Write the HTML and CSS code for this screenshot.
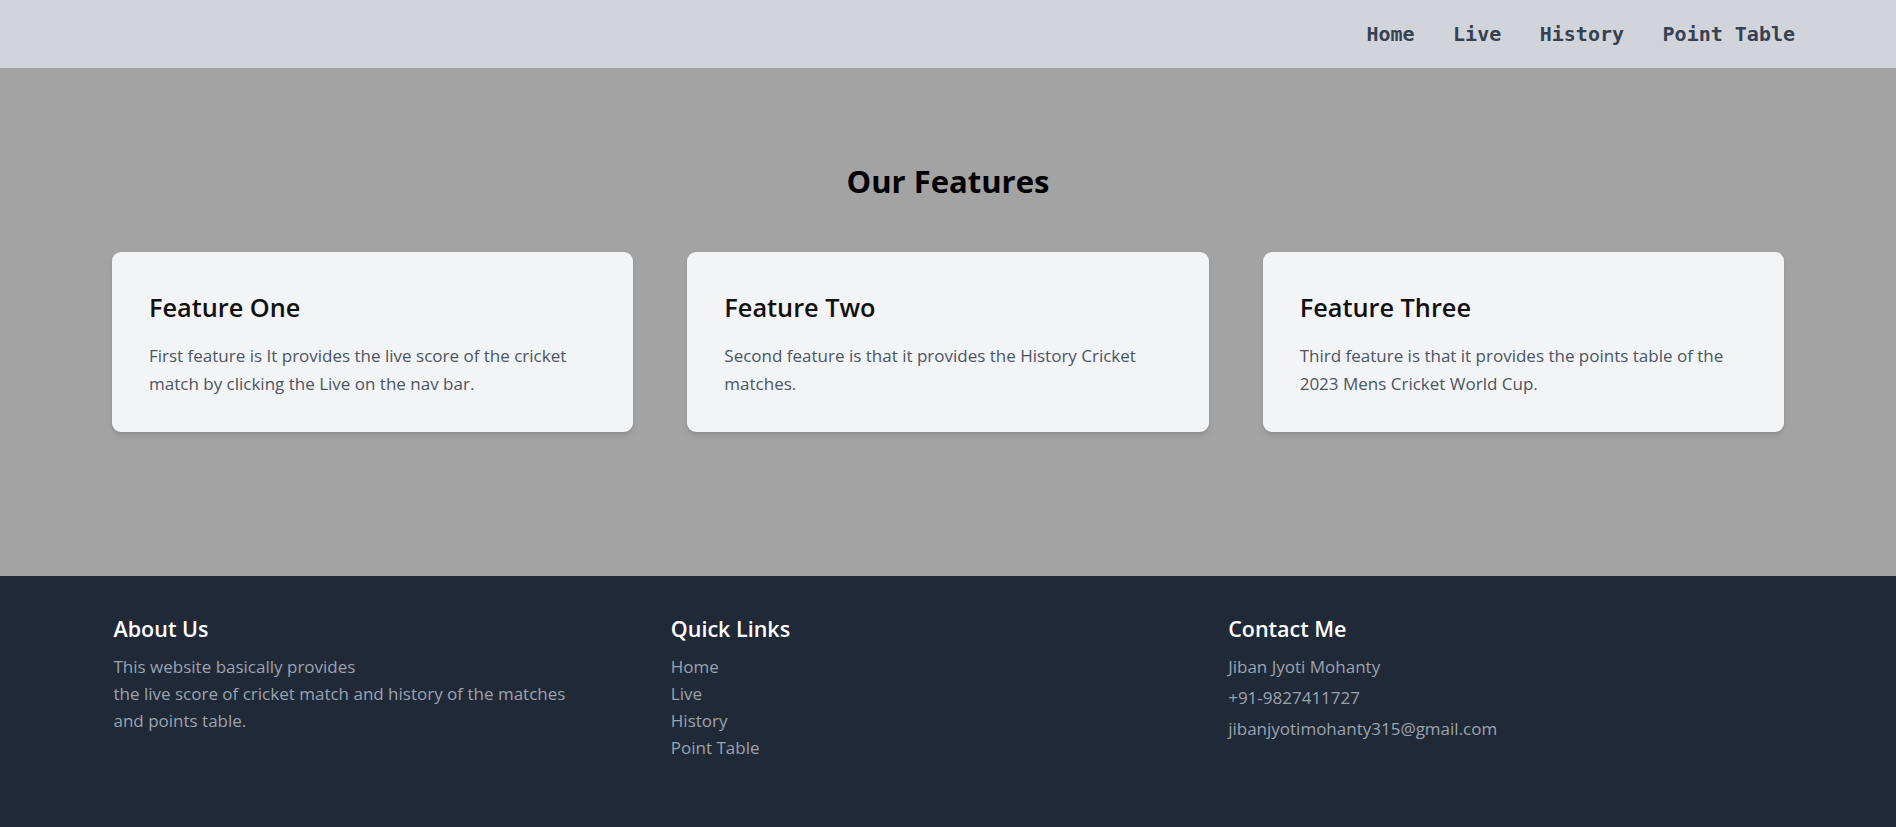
FILE: index.html
```html
<!DOCTYPE html>
<html lang="en">
<head>
<meta charset="utf-8">
<title>Cricket Score</title>
<link rel="stylesheet" href="styles.css">
</head>
<body>
<div class="page">
  <nav class="navbar">
    <ul class="nav-links">
      <li><a href="#">Home</a></li>
      <li><a href="#">Live</a></li>
      <li><a href="#">History</a></li>
      <li><a href="#">Point Table</a></li>
    </ul>
  </nav>

  <main class="features">
    <h2 class="features-title">Our Features</h2>
    <div class="feature-grid">
      <div class="card">
        <h3 class="card-title">Feature One</h3>
        <p class="card-text">First feature is It provides the live score of the cricket match by clicking the Live on the nav bar.</p>
      </div>
      <div class="card">
        <h3 class="card-title">Feature Two</h3>
        <p class="card-text">Second feature is that it provides the History Cricket matches.</p>
      </div>
      <div class="card">
        <h3 class="card-title">Feature Three</h3>
        <p class="card-text">Third feature is that it provides the points table of the 2023 Mens Cricket World Cup.</p>
      </div>
    </div>
  </main>

  <footer class="footer">
    <div class="footer-grid">
      <div class="footer-col">
        <h4 class="footer-heading">About Us</h4>
        <p class="footer-text">This website basically provides<br>the live score of cricket match and history of the matches<br>and points table.</p>
      </div>
      <div class="footer-col">
        <h4 class="footer-heading">Quick Links</h4>
        <ul class="footer-links">
          <li><a href="#">Home</a></li>
          <li><a href="#">Live</a></li>
          <li><a href="#">History</a></li>
          <li><a href="#">Point Table</a></li>
        </ul>
      </div>
      <div class="footer-col">
        <h4 class="footer-heading">Contact Me</h4>
        <ul class="footer-contact">
          <li>Jiban Jyoti Mohanty</li>
          <li>+91-9827411727</li>
          <li>jibanjyotimohanty315@gmail.com</li>
        </ul>
      </div>
    </div>
  </footer>
</div>
</body>
</html>
```

FILE: styles.css
```css
* {
  box-sizing: border-box;
}

html, body {
  margin: 0;
  padding: 0;
}

body {
  font-family: "Open Sans", "Noto Sans", sans-serif;
  background: #1f2937;
}

.page {
  min-height: 100vh;
  display: flex;
  flex-direction: column;
}

/* Navbar */
.navbar {
  height: 68px;
  background: #d1d5db;
  display: flex;
  justify-content: flex-end;
  align-items: center;
  padding-right: 101px;
}

.nav-links {
  display: flex;
  gap: 38.5px;
  list-style: none;
  margin: 0;
  padding: 0;
}

.nav-links a {
  font-family: "DejaVu Sans Mono", "Liberation Mono", monospace;
  font-weight: 700;
  font-size: 20px;
  line-height: 24px;
  color: #374151;
  text-decoration: none;
}

/* Features */
.features {
  background: #a3a3a3;
  padding: 93.5px 112px 144px;
}

.features-title {
  margin: 0 0 50.5px;
  text-align: center;
  font-size: 31px;
  line-height: 39.6px;
  font-weight: 700;
  color: #000;
}

.feature-grid {
  display: grid;
  grid-template-columns: repeat(3, 1fr);
  gap: 54px;
}

.card {
  background: #f3f4f6;
  border-radius: 9px;
  box-shadow: 0 4px 6px -1px rgba(0, 0, 0, 0.1), 0 2px 4px -2px rgba(0, 0, 0, 0.1);
  padding: 38px 35px 34.6px 37px;
}

.card-title {
  margin: 0 0 17.6px;
  font-size: 25.3px;
  line-height: 35.2px;
  font-weight: 600;
  color: #111;
}

.card-text {
  margin: 0;
  font-size: 17px;
  line-height: 27.3px;
  color: #4b5563;
}

/* Footer */
.footer {
  flex: 1;
  background: #1f2937;
  padding: 38.7px 110.5px 35px 113.5px;
}

.footer-grid {
  display: grid;
  grid-template-columns: repeat(3, 1fr);
}

.footer-heading {
  margin: 0 0 7.6px;
  font-size: 21.5px;
  line-height: 30.8px;
  font-weight: 600;
  color: #fff;
}

.footer-text {
  margin: 0;
  font-size: 17px;
  line-height: 27.3px;
  color: #9ca3af;
}

.footer-links,
.footer-contact {
  list-style: none;
  margin: 0;
  padding: 0;
  font-size: 17px;
  line-height: 27px;
  color: #9ca3af;
}

.footer-links a {
  color: #9ca3af;
  text-decoration: none;
}

.footer-contact li {
  margin-bottom: 4.4px;
}
```
